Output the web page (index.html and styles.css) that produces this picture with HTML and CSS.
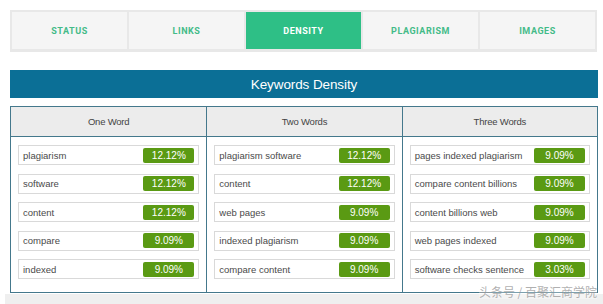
FILE: index.html
```html
<!DOCTYPE html>
<html>
<head>
<meta charset="utf-8">
<link rel="stylesheet" href="styles.css">
</head>
<body>
<div class="page">
  <nav class="tabs">
    <div class="tab">STATUS</div>
    <div class="tab">LINKS</div>
    <div class="tab active">DENSITY</div>
    <div class="tab">PLAGIARISM</div>
    <div class="tab">IMAGES</div>
  </nav>
  <h2 class="title">Keywords Density</h2>
  <div class="table">
    <div class="col">
      <div class="head">One Word</div>
      <div class="list">
        <div class="row"><span>plagiarism</span><span class="badge">12.12%</span></div>
        <div class="row"><span>software</span><span class="badge">12.12%</span></div>
        <div class="row"><span>content</span><span class="badge">12.12%</span></div>
        <div class="row"><span>compare</span><span class="badge">9.09%</span></div>
        <div class="row"><span>indexed</span><span class="badge">9.09%</span></div>
      </div>
    </div>
    <div class="col">
      <div class="head">Two Words</div>
      <div class="list">
        <div class="row"><span>plagiarism software</span><span class="badge">12.12%</span></div>
        <div class="row"><span>content</span><span class="badge">12.12%</span></div>
        <div class="row"><span>web pages</span><span class="badge">9.09%</span></div>
        <div class="row"><span>indexed plagiarism</span><span class="badge">9.09%</span></div>
        <div class="row"><span>compare content</span><span class="badge">9.09%</span></div>
      </div>
    </div>
    <div class="col">
      <div class="head">Three Words</div>
      <div class="list">
        <div class="row"><span>pages indexed plagiarism</span><span class="badge">9.09%</span></div>
        <div class="row"><span>compare content billions</span><span class="badge">9.09%</span></div>
        <div class="row"><span>content billions web</span><span class="badge">9.09%</span></div>
        <div class="row"><span>web pages indexed</span><span class="badge">9.09%</span></div>
        <div class="row"><span>software checks sentence</span><span class="badge">3.03%</span></div>
      </div>
    </div>
    <div class="watermark">头条号 / 百聚汇商学院</div>
  </div>
  <div class="strip"></div>
</div>
</body>
</html>
```
FILE: styles.css
```css
* { box-sizing: border-box; }
html, body { margin: 0; padding: 0; background: #fff; }
body { font-family: "Liberation Sans", Arial, sans-serif; overflow: hidden; }
.page { padding: 10px 5px 0 10px; width: 603px; }

.tabs {
  display: grid;
  grid-template-columns: repeat(5, 115px);
  gap: 2px;
  padding: 2px 2px 3px 2px;
  background: #e8e8e8;
  width: 587px;
}
.tab {
  height: 37px;
  background: #f5f5f5;
  display: flex;
  align-items: center;
  justify-content: center;
  padding-top: 1px;
  font-family: Roboto, "Liberation Sans", sans-serif;
  font-weight: 700;
  font-size: 9px;
  letter-spacing: 0.55px;
  color: #43bb88;
}
.tab.active { background: #2ebf86; color: #fff; }

.title {
  margin: 18px 0 0 0;
  width: 588px;
  height: 28px;
  background: #0b6f96;
  color: #fff;
  font-weight: 400;
  font-size: 13.5px;
  letter-spacing: -0.1px;
  line-height: 29px;
  text-align: center;
}

.table {
  position: relative;
  margin-top: 8px;
  width: 588px;
  height: 187px;
  border: 1px solid #44788c;
  display: grid;
  grid-template-columns: 1fr 1fr 1fr;
}
.col + .col { border-left: 1px solid #44788c; }
.head {
  height: 30px;
  background: #ececec;
  border-bottom: 1px solid #44788c;
  display: flex;
  align-items: center;
  justify-content: center;
  font-size: 9.5px;
  letter-spacing: -0.2px;
  color: #444;
}
.list {
  padding: 8px 7px 0 7px;
  display: flex;
  flex-direction: column;
  gap: 8.5px;
}
.row {
  height: 20px;
  border: 1px solid #d9d9d9;
  display: flex;
  align-items: center;
  justify-content: space-between;
  padding: 0 4px;
  font-size: 9.5px;
  letter-spacing: 0;
  color: #4a4a4a;
  white-space: nowrap;
}
.badge {
  width: 51px;
  height: 15px;
  background: #5a9a13;
  color: #fff;
  border-radius: 2px;
  font-size: 10px;
  line-height: 15px;
  text-align: center;
}
.watermark {
  position: absolute;
  right: 0;
  bottom: -7px;
  font-family: "Noto Sans CJK SC", sans-serif;
  font-size: 12px;
  line-height: 14px;
  color: rgba(150, 150, 150, 0.75);
  background: rgba(255, 255, 255, 0.3);
}
.strip {
  margin: 1px -5px 0 -5px;
  height: 12px;
  background: #efefef;
}
```
